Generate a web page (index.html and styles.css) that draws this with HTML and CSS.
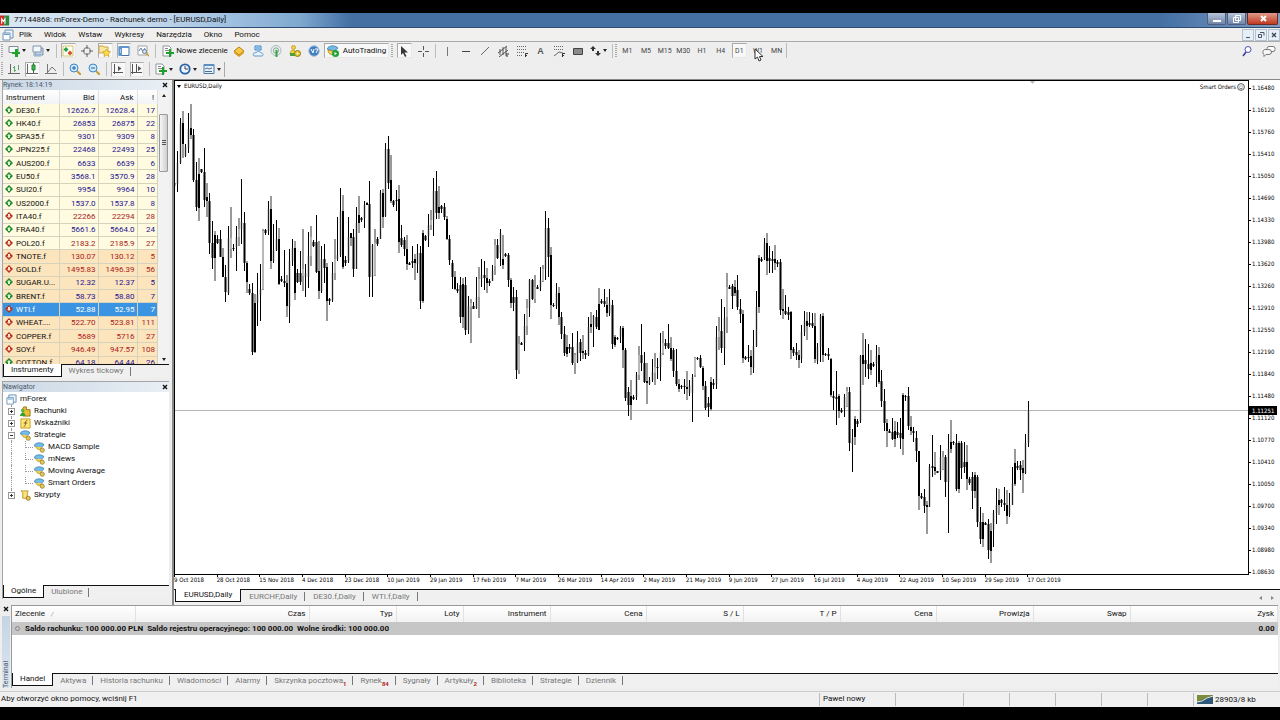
FILE: index.html
```html
<!DOCTYPE html>
<html lang="pl">
<head>
<meta charset="utf-8">
<title>77144868: mForex-Demo - Rachunek demo - [EURUSD,Daily]</title>
<link rel="stylesheet" href="styles.css">
</head>
<body>
<svg class="defs" aria-hidden="true">
  <defs>
    <symbol id="doc" viewBox="0 0 12 12"><path d="M3 1h8v8H3z" fill="#eaf3fb" stroke="#6f93b5"/><path d="M1 4h7v7H1z" fill="#fff" stroke="#6f93b5"/><path d="M2 5h5v1H2z" fill="#5e9bd0"/></symbol>
    <symbol id="newchart" viewBox="0 0 12 12"><path d="M1 1.500h9v6H1z" fill="#f5f8fb" stroke="#7d8b9a"/><path d="M7 4h3v3h2v2h-2v3H7V9H4V7h3z" fill="#20a32b"/></symbol>
    <symbol id="profiles" viewBox="0 0 12 12"><path d="M3 3h8v7H3z" fill="#b9d4ec" stroke="#8194a8"/><path d="M1 1h8v6H1z" fill="#f3f7fb" stroke="#8194a8"/><path d="M2 8v3h7" fill="none" stroke="#8aaccc"/></symbol>
    <symbol id="market" viewBox="0 0 12 12"><path d="M1 1h10v10H1z" fill="#fffdf2" stroke="#d9c76c"/><path d="M4 2l2.500 2.500L4 7 1.500 4.500z" fill="#26a040"/><path d="M8 5.500L10.500 8 8 10.500 5.500 8z" fill="#d0552f"/></symbol>
    <symbol id="target" viewBox="0 0 12 12"><circle cx="6" cy="6" r="3.500" fill="none" stroke="#777"/><path d="M6 0v4M6 8v4M0 6h4M8 6h4" stroke="#666"/></symbol>
    <symbol id="stars" viewBox="0 0 12 12"><path d="M0 1h4l1 1h4v6H0z" fill="#f7e9a4" stroke="#cfa634"/><path d="M7.500 4l1.300 2.300 2.700.5-2 1.900.4 2.800-2.400-1.200L5 11.500l.5-2.800-2-1.900 2.700-.5z" fill="#ffdc4b" stroke="#c99a1b" stroke-width=".7"/></symbol>
    <symbol id="terminal" viewBox="0 0 12 12"><path d="M1 1.500h10v9H1z" fill="#fff" stroke="#416fa3"/><path d="M1 1h10v2H1zM1 3h3v8H1z" fill="#5f96cf"/><path d="M2 5h1M2 7h1" stroke="#fff"/></symbol>
    <symbol id="tester" viewBox="0 0 12 12"><path d="M1 1h9v9H1z" fill="#fff" stroke="#a3a3a3"/><path d="M2 6l2-3 2 4 2-4" fill="none" stroke="#5784b0"/><circle cx="7.500" cy="6.500" r="2" fill="#d2e6f7" stroke="#66798c"/><path d="M9 8l3 3" stroke="#cd9b30" stroke-width="1.500"/></symbol>
    <symbol id="order" viewBox="0 0 12 12"><path d="M1 1h6l2 2v8H1z" fill="#fff" stroke="#8d96a0"/><path d="M3 3.500h3M3 5.500h4" stroke="#888"/><path d="M7 4h2v3h3v2H9v3H7V9H4V7h3z" fill="#1da12c"/></symbol>
    <symbol id="book" viewBox="0 0 12 12"><path d="M1 6l5-4 5 4-5 4z" fill="#f6c844" stroke="#b97d12"/><path d="M1 6v2l5 4 5-4V6l-5 4z" fill="#d79a23"/></symbol>
    <symbol id="sync" viewBox="0 0 12 12"><path d="M3 1h6v4H3z" fill="#d8edff" stroke="#2f84cb"/><path d="M4 3h4" stroke="#2f84cb"/><path d="M2 11c-2-2 0-4 2-3 1-2 4-2 5 0 2 0 3 2 1 3z" fill="#eaf5fd" stroke="#5d98ca"/></symbol>
    <symbol id="signal" viewBox="0 0 12 12"><circle cx="6" cy="5.500" r="5" fill="none" stroke="#a8b8c0"/><circle cx="6" cy="5.500" r="2.700" fill="#dceadd" stroke="#86a8a0"/><path d="M5.500 5h2v7h-2z" fill="#38a645"/></symbol>
    <symbol id="people" viewBox="0 0 12 12"><circle cx="4.500" cy="2.500" r="2" fill="#f6d33b" stroke="#b38c11" stroke-width=".7"/><path d="M1 9c0-5 6-5 6 0z" fill="#f6d33b" stroke="#b38c11" stroke-width=".7"/><circle cx="8.500" cy="8.500" r="3" fill="#e7c52d" stroke="#9b7a0d"/><path d="M1 8h5v3H1z" fill="#45a33e"/><circle cx="8.500" cy="8.500" r="1" fill="#fff"/></symbol>
    <symbol id="globe" viewBox="0 0 12 12"><circle cx="6" cy="6" r="5.200" fill="#3f7fc4" stroke="#9cb8d3"/><path d="M3 4l2 4 1-4M7 4h3l-2 4" fill="none" stroke="#fff"/></symbol>
    <symbol id="hat" viewBox="0 0 12 12"><path d="M0 4c2-4 8-4 11-1L7 7z" fill="#71bce8" stroke="#3a79a8" stroke-width=".8"/><path d="M2 5c1 4 5 4 7 1" fill="#f3d250" stroke="#a98622" stroke-width=".8"/><circle cx="9" cy="9" r="2.300" fill="#e8c451" stroke="#8b7b3d" stroke-width=".8"/></symbol>
    <symbol id="auto" viewBox="0 0 12 12"><path d="M0 4c2-4 8-4 11-1L7 6z" fill="#71bce8" stroke="#3a79a8" stroke-width=".8"/><path d="M1 5c0 6 7 6 9 1L6 6z" fill="#f3d250" stroke="#a98622" stroke-width=".8"/><circle cx="8.500" cy="8.500" r="3.500" fill="#20a437"/><path d="M7.500 7v3.200L10 8.600z" fill="#fff"/></symbol>
    <symbol id="cursor" viewBox="0 0 12 12"><path d="M3 1v9l2-2 2 4 1.500-1-2-3.500H10z" fill="#383838"/></symbol>
    <symbol id="cross" viewBox="0 0 12 12"><path d="M6.500 1v4M6.500 8v4M1 6.500h4M8 6.500h4" stroke="#555"/></symbol>
    <symbol id="vline" viewBox="0 0 12 12"><path d="M6.500 2v9" stroke="#777"/></symbol>
    <symbol id="hline" viewBox="0 0 12 12"><path d="M2 6.500h8" stroke="#444"/></symbol>
    <symbol id="diag" viewBox="0 0 12 12"><path d="M2 10l8-8" stroke="#666"/></symbol>
    <symbol id="channel" viewBox="0 0 12 12"><path d="M1 8l9-7M2 12l9-7M3 4v6M6 2v8M9 2v9" stroke="#555" fill="none"/><path d="M9 9h3M9 11h2" stroke="#333"/></symbol>
    <symbol id="fibo" viewBox="0 0 12 12"><path d="M1 1.500h10M1 4.500h10M1 7.500h8M1 10.500h6" stroke="#666" stroke-dasharray="1 1"/><path d="M9.500 12V8.500H12M9 10.500h2" stroke="#333" fill="none"/></symbol>
    <symbol id="fan" viewBox="0 0 12 12"><path d="M1 1.500h10M1 4.500h10" stroke="#666" stroke-dasharray="1 1"/><path d="M1 11l5-4 4 1" stroke="#666" fill="none"/><path d="M9.500 12V8.500H12M9 10.500h2" stroke="#333" fill="none"/></symbol>
    <symbol id="rect" viewBox="0 0 12 12"><path d="M1.500 3.500h9v6h-9z" fill="#8a8a8a" stroke="#444"/></symbol>
    <symbol id="arrows" viewBox="0 0 12 12"><path d="M4 1l3 3H5v2H3V4H1zM9 11L6 8h2V6h2v2h2z" fill="#333"/></symbol>
    <symbol id="bars" viewBox="0 0 12 12"><path d="M2.500 1v10M0 10.500h12" stroke="#666"/><path d="M6.500 3v6M5 4.500h1M7 7.500h1M10.500 2v5" stroke="#5aa866"/></symbol>
    <symbol id="candles" viewBox="0 0 12 12"><path d="M1.500 1v10M0 10.500h12" stroke="#666"/><path d="M7.500 0v10" stroke="#2b7a35"/><path d="M6 2h3v5H6z" fill="#38c04c" stroke="#2b7a35"/></symbol>
    <symbol id="line" viewBox="0 0 12 12"><path d="M2.500 1v10M0 10.500h12M3 9l4-5 4 4" stroke="#777" fill="none"/></symbol>
    <symbol id="zin" viewBox="0 0 12 12"><path d="M8 8l4 4" stroke="#c79b31" stroke-width="2"/><circle cx="5" cy="5" r="4" fill="#cfe7fb" stroke="#3d86c8"/><path d="M3 5h4M5 3v4" stroke="#2063a4"/></symbol>
    <symbol id="zout" viewBox="0 0 12 12"><path d="M8 8l4 4" stroke="#c79b31" stroke-width="2"/><circle cx="5" cy="5" r="4" fill="#cfe7fb" stroke="#3d86c8"/><path d="M3 5h4" stroke="#2063a4"/></symbol>
    <symbol id="scroll" viewBox="0 0 12 12"><path d="M2.500 1v10M1 9.500h10" stroke="#555"/><path d="M6 3l3.500 2.500L6 8z" fill="#555"/></symbol>
    <symbol id="shift" viewBox="0 0 12 12"><path d="M1.500 1v10M0 9.500h11M5.500 1v8" stroke="#555"/><path d="M7 3l3.500 2.500L7 8z" fill="#555"/></symbol>
    <symbol id="clock" viewBox="0 0 12 12"><circle cx="6" cy="6" r="4.700" fill="#eef5fd" stroke="#2862a8" stroke-width="1.800"/><path d="M6 3v3h3" fill="none" stroke="#444"/></symbol>
    <symbol id="template" viewBox="0 0 12 12"><path d="M1 1.500h10v9H1z" fill="#e8f1fa" stroke="#4e79a6"/><path d="M1 1h10v2H1z" fill="#5a8fc6"/><path d="M2 6l2-1 2 1 3-1M2 8.500h7" fill="none" stroke="#4a6f95"/></symbol>
    <symbol id="up" viewBox="0 0 8 8"><path d="M4 0l4 4-4 4-4-4z" fill="#1f8a2d"/><path d="M4 2l2 2H5v2H3V4H2z" fill="#dff5d8"/></symbol>
    <symbol id="down" viewBox="0 0 8 8"><path d="M4 0l4 4-4 4-4-4z" fill="#b5321f"/><path d="M4 6l2-2H5V2H3v2H2z" fill="#ffe2d3"/></symbol>
    <symbol id="accounts" viewBox="0 0 12 12"><path d="M4 1h3v3h4v7H3V3z" fill="#e9bf35" stroke="#98740e"/><circle cx="3" cy="5" r="2" fill="#53b544"/><path d="M0 11c0-5 6-5 6 0z" fill="#37a035"/></symbol>
    <symbol id="func" viewBox="0 0 12 12"><path d="M1 1h10v10H1z" fill="#ffe77a" stroke="#c49a21"/><path d="M8 3c-2-.5-2 1-2 3s-.5 3-2 3M4 5.500h4" fill="none" stroke="#6c5310"/></symbol>
    <symbol id="script" viewBox="0 0 12 12"><path d="M1 1h8l-1 2v6H3V3z" fill="#fbe27c" stroke="#b9962d"/><circle cx="9" cy="9" r="2.200" fill="#f2cc44" stroke="#92752a"/></symbol>
    <symbol id="close" viewBox="0 0 6 6"><path d="M1 1l4 4M5 1L1 5" stroke="#111" stroke-width="1.400"/></symbol>
  </defs>
</svg>

<header class="titlebar">
  <svg class="logo" viewBox="0 0 12 12"><path d="M0 0h5v12H0z" fill="#cf2b24"/><path d="M5 0h6v12H5z" fill="#2e8b3d"/><path d="M2 10V4l2 3 2-3v6" fill="none" stroke="#fff" stroke-width="1.300"/></svg>
  <h1>77144868: mForex-Demo - Rachunek demo - [EURUSD,Daily]</h1>
  <div class="winbtns">
    <button class="wb" aria-label="Minimalizuj"><svg viewBox="0 0 12 10"><path d="M2 6h8v2H2z" fill="#fff"/></svg></button>
    <button class="wb" aria-label="Przywróć"><svg viewBox="0 0 12 10"><path d="M4.500 1.500h5v5h-5zM2.500 3.500h5v5h-5z" fill="none" stroke="#fff"/></svg></button>
    <button class="wb wb-close" aria-label="Zamknij"><svg viewBox="0 0 12 10"><path d="M4 2l5 5M9 2L4 7" stroke="#fff" stroke-width="2"/></svg></button>
  </div>
</header>

<nav class="menubar">
  <svg class="ic"><use href="#doc"/></svg>
  <button>Plik</button><button>Widok</button><button>Wstaw</button><button>Wykresy</button><button>Narzędzia</button><button>Okno</button><button>Pomoc</button>
  <div class="mdi">
    <button aria-label="Minimalizuj okno"><svg viewBox="0 0 12 12"><path d="M4 8.500h4" stroke="#456"/></svg></button>
    <button aria-label="Przywróć okno"><svg viewBox="0 0 12 12"><path d="M5 3.500h4v3M3.500 5.500h3v3h-3z" fill="none" stroke="#456"/></svg></button>
    <button aria-label="Zamknij okno"><svg viewBox="0 0 12 12"><path d="M4 4l4 4M8 4L4 8" stroke="#345" stroke-width="1.300"/></svg></button>
  </div>
</nav>

<div class="toolbar tb1">
  <i class="grip"></i>
  <button class="drop" aria-label="Nowy wykres"><svg class="ic"><use href="#newchart"/></svg></button>
  <button class="drop" aria-label="Profile"><svg class="ic"><use href="#profiles"/></svg></button>
  <i class="sep"></i>
  <div class="group g5">
    <button class="on" aria-label="Rynek"><svg class="ic"><use href="#market"/></svg></button>
    <button aria-label="Okno danych"><svg class="ic"><use href="#target"/></svg></button>
    <button class="on" aria-label="Nawigator"><svg class="ic"><use href="#stars"/></svg></button>
    <button class="on" aria-label="Terminal"><svg class="ic"><use href="#terminal"/></svg></button>
    <button aria-label="Tester"><svg class="ic"><use href="#tester"/></svg></button>
  </div>
  <i class="sep"></i>
  <button class="wide order"><svg class="ic"><use href="#order"/></svg>Nowe zlecenie</button>
  <div class="group g5">
    <button aria-label="MetaEditor"><svg class="ic"><use href="#book"/></svg></button>
    <button aria-label="Hosting"><svg class="ic"><use href="#sync"/></svg></button>
    <button aria-label="Sygnały"><svg class="ic"><use href="#signal"/></svg></button>
    <button aria-label="Społeczność"><svg class="ic"><use href="#people"/></svg></button>
    <button aria-label="Market"><svg class="ic"><use href="#globe"/></svg></button>
  </div>
  <button class="wide auto on"><svg class="ic"><use href="#auto"/></svg>AutoTrading</button>
  <i class="grip"></i>
  <div class="group g2">
    <button class="on" aria-label="Kursor"><svg class="ic"><use href="#cursor"/></svg></button>
    <button aria-label="Celownik"><svg class="ic"><use href="#cross"/></svg></button>
  </div>
  <i class="sep"></i>
  <div class="group g8">
    <button aria-label="Linia pionowa"><svg class="ic"><use href="#vline"/></svg></button>
    <button aria-label="Linia pozioma"><svg class="ic"><use href="#hline"/></svg></button>
    <button aria-label="Linia trendu"><svg class="ic"><use href="#diag"/></svg></button>
    <button aria-label="Kanał"><svg class="ic"><use href="#channel"/></svg></button>
    <button aria-label="Fibonacci"><svg class="ic"><use href="#fibo"/></svg></button>
    <button class="letter">A</button>
    <button aria-label="Wachlarz"><svg class="ic"><use href="#fan"/></svg></button>
    <button aria-label="Prostokąt"><svg class="ic"><use href="#rect"/></svg></button>
  </div>
  <button class="drop slim" aria-label="Strzałki"><svg class="ic"><use href="#arrows"/></svg></button>
  <i class="sep"></i><i class="grip"></i>
  <div class="group g9">
    <button>M1</button><button>M5</button><button>M15</button><button>M30</button><button>H1</button><button>H4</button><button class="on">D1</button><button class="hover">W1<svg class="pointer" viewBox="0 0 10 14"><path d="M1 1v10l2.500-2 1.500 4 2-1-1.500-3.500H9z" fill="#fff" stroke="#333"/></svg></button><button>MN</button>
  </div>
  <div class="tools-end">
    <button aria-label="Szukaj"><svg class="ic" viewBox="0 0 12 12"><circle cx="7" cy="4.500" r="3" fill="#fff" stroke="#4a4fb0"/><path d="M5 7l-3 4" stroke="#3a3f9c" stroke-width="1.600"/></svg></button>
    <button aria-label="Czat"><svg class="chat" viewBox="0 0 14 12"><rect x="5" y="1.500" width="8" height="5" rx="2" fill="#fff" stroke="#777"/><path d="M3 4.500h4a2 2 0 0 1 0 5H4l-2 2v-2c-2-1-1-5 1-5z" fill="#f5f5f5" stroke="#777"/></svg></button>
  </div>
</div>

<div class="toolbar tb2">
  <i class="grip"></i>
  <div class="group g3">
    <button aria-label="Słupki"><svg class="ic"><use href="#bars"/></svg></button>
    <button class="on" aria-label="Świece"><svg class="ic"><use href="#candles"/></svg></button>
    <button aria-label="Linia"><svg class="ic"><use href="#line"/></svg></button>
  </div>
  <i class="sep"></i>
  <div class="group g2">
    <button aria-label="Powiększ"><svg class="ic"><use href="#zin"/></svg></button>
    <button aria-label="Pomniejsz"><svg class="ic"><use href="#zout"/></svg></button>
  </div>
  <i class="sep"></i>
  <div class="group g2">
    <button class="on" aria-label="Autoprzewijanie"><svg class="ic"><use href="#scroll"/></svg></button>
    <button class="on" aria-label="Przesunięcie"><svg class="ic"><use href="#shift"/></svg></button>
  </div>
  <i class="sep"></i>
  <button class="drop" aria-label="Wskaźniki"><svg class="ic"><use href="#order"/></svg></button>
  <button class="drop" aria-label="Interwały"><svg class="ic"><use href="#clock"/></svg></button>
  <button class="drop" aria-label="Szablony"><svg class="ic"><use href="#template"/></svg></button>
  <i class="edge"></i>
</div>

<main class="main">
  <aside class="side">
    <section class="panel market">
      <div class="caption"><h2>Rynek: 18:14:19</h2><button aria-label="Zamknij"><svg><use href="#close"/></svg></button></div>
      <div class="market-body">
        <table class="quotes">
          <colgroup><col class="c-name"><col class="c-bid"><col class="c-ask"><col></colgroup>
          <thead><tr><th>Instrument</th><th>Bid</th><th>Ask</th><th>!</th></tr></thead>
          <tbody id="quotes"></tbody>
        </table>
        <div class="scrollbar"><i class="tri-up"></i><i class="thumb"></i><i class="tri-down"></i></div>
      </div>
      <div class="tabs"><button class="active">Instrumenty</button><button>Wykres tickowy</button></div>
    </section>
    <section class="panel navigator">
      <div class="caption"><h2>Nawigator</h2><button aria-label="Zamknij"><svg><use href="#close"/></svg></button></div>
      <ul class="tree">
        <li><svg class="ic"><use href="#doc"/></svg>mForex</li>
        <li class="l1"><i class="box plus"></i><svg class="ic"><use href="#accounts"/></svg>Rachunki</li>
        <li class="l1"><i class="box plus"></i><svg class="ic"><use href="#func"/></svg>Wskaźniki</li>
        <li class="l1"><i class="box"></i><svg class="ic"><use href="#hat"/></svg>Strategie</li>
        <li class="l2"><svg class="ic"><use href="#hat"/></svg>MACD Sample</li>
        <li class="l2"><svg class="ic"><use href="#hat"/></svg>mNews</li>
        <li class="l2"><svg class="ic"><use href="#hat"/></svg>Moving Average</li>
        <li class="l2"><svg class="ic"><use href="#hat"/></svg>Smart Orders</li>
        <li class="l1 end"><i class="box plus"></i><svg class="ic"><use href="#script"/></svg>Skrypty</li>
      </ul>
      <div class="tabs"><button class="active">Ogólne</button><button>Ulubione</button></div>
    </section>
  </aside>

  <section class="chart">
    <div class="chart-grid">
      <div class="plot">
        <svg id="candles-plot" viewBox="175 81 1073 493" preserveAspectRatio="none" role="img" aria-label="EURUSD, Daily">
          <path d="M175 410.500H1248" stroke="#b4b4b4"/>
          <path d="M1030 81h5l-2.500 3z" fill="#bbb"/>
        </svg>
        <span class="symbol">EURUSD,Daily</span>
        <span class="expert">Smart Orders<svg viewBox="0 0 8 8"><circle cx="4" cy="4" r="3.400" fill="#fff" stroke="#333" stroke-width=".8"/><path d="M2.500 3h1M4.500 3h1M2.300 4.800c1 1.300 2.400 1.300 3.400 0" stroke="#333" stroke-width=".8" fill="none"/></svg></span>
      </div>
      <div class="prices" id="prices"></div>
      <div class="times" id="times"></div>
      <output class="quote-now">1.11251</output>
    </div>
    <div class="tabs chart-tabs"><button class="active">EURUSD,Daily</button><button>EURCHF,Daily</button><button>DE30.f,Daily</button><button>WTI.f,Daily</button><span class="tab-arrows"><i></i><i></i></span></div>
  </section>
</main>

<section class="terminal">
  <div class="strip"><button aria-label="Zamknij"><svg><use href="#close"/></svg></button><h2>Terminal</h2></div>
  <div class="term-body">
    <table class="orders">
      <colgroup><col class="w123"><col class="w174"><col class="w87"><col class="w67"><col class="w87"><col class="w96"><col class="w97"><col class="w97"><col class="w96"><col class="w97"><col class="w97"><col></colgroup>
      <thead><tr><th>Zlecenie <i>/</i></th><th>Czas</th><th>Typ</th><th>Loty</th><th>Instrument</th><th>Cena</th><th>S / L</th><th>T / P</th><th>Cena</th><th>Prowizja</th><th>Swap</th><th>Zysk</th></tr></thead>
      <tbody><tr><td colspan="11"><span class="dot"></span>Saldo rachunku: 100 000.00 PLN&nbsp; Saldo rejestru operacyjnego: 100 000.00&nbsp; Wolne środki: 100 000.00</td><td>0.00</td></tr></tbody>
    </table>
    <div class="tabs term-tabs"><button class="active">Handel</button><button>Aktywa</button><button>Historia rachunku</button><button>Wiadomości</button><button>Alarmy</button><button>Skrzynka pocztowa<sub>1</sub></button><button>Rynek<sub>84</sub></button><button>Sygnały</button><button>Artykuły<sub>2</sub></button><button>Biblioteka</button><button>Strategie</button><button>Dziennik</button></div>
  </div>
</section>

<footer class="status">
  <span class="hint">Aby otworzyć okno pomocy, wciśnij F1</span>
  <span class="s76">Pawel nowy</span><span class="s68"></span><span class="s47"></span><span class="s47"></span><span class="s47"></span><span class="s47"></span><span class="s47"></span>
  <span class="traffic"><svg viewBox="0 0 16 9"><path d="M0 0h16v9H0z" fill="#2d5878"/><path d="M0 0h16L0 7z" fill="#7d8b3c"/><path d="M0 7l5-1 5-3 6-2" fill="none" stroke="#e8edd8"/></svg>28903/8 kb</span>
</footer>
<script src="chart.js"></script>
</body>
</html>
```
FILE: styles.css
```css
* { box-sizing: border-box; }
body { margin: 0; padding: 13px 0; height: 100vh; display: flex; flex-direction: column; background: #000; color: #111; font: 8px/12px Roboto, "Open Sans", sans-serif; overflow: hidden; }
button { font: inherit; color: inherit; background: none; border: 0; padding: 0; margin: 0; display: flex; align-items: center; justify-content: center; white-space: nowrap; }
h1, h2 { margin: 0; font: inherit; white-space: nowrap; }
.defs { position: absolute; top: 0; width: 0; height: 0; }
.ic { width: 12px; height: 12px; flex: none; }

.titlebar { height: 15px; flex: none; display: flex; align-items: center; background: linear-gradient(90deg, #dbe7f3 0, #c3d7ea 150px, #9fc0e0 230px, #7fa8d0 300px, #4470a4 350px, #4470a4 1160px, #7f9cc0 100%); border-bottom: 1px solid #2c4c74; }
.titlebar h1 { flex: 1; padding-left: 4px; }
.logo { width: 10px; height: 11px; }
.winbtns { display: flex; align-self: flex-start; gap: 1px; padding-right: 2px; }
.wb { width: 19px; height: 12px; background: linear-gradient(#b6c4d8, #7186a8); border: 1px solid #4d6082; border-top: 0; border-radius: 0 0 2px 2px; }
.wb svg { width: 12px; height: 10px; }
.wb-close { width: 31px; background: linear-gradient(#e09a8c, #c03a20); border-color: #6e2a22; }

.menubar { height: 14px; flex: none; display: flex; align-items: center; background: #f1f0ee; border-bottom: 1px solid #aaa; padding-left: 2px; }
.menubar > button { margin-left: 12px; }
.menubar > .ic + button { margin-left: 5px; }
.mdi { margin-left: auto; display: flex; gap: 1px; }
.mdi button { width: 12px; height: 12px; background: #e6eff8; border: 1px solid #b5c3d0; }
.mdi svg { width: 12px; height: 12px; flex: none; }

.toolbar { flex: none; display: flex; align-items: center; background: #eee; padding: 0 0 2px 1px; }
.tb1 { height: 19px; }
.tb2 { height: 18px; }
.grip { width: 2px; height: 14px; margin-right: 2px; background: repeating-linear-gradient(#aaa 0 1px, #eee 1px 2px); }
.sep { width: 1px; height: 14px; background: #bdbdbd; margin: 0 2px 0 3px; }
.sep + .grip { margin-right: 1px; }
.edge { width: 1px; height: 15px; background: #aaa; }
.toolbar button { height: 15px; border: 1px solid transparent; }
.toolbar button.on { background: #f8f8f8; border-color: #aaa #e8e8e8 #e8e8e8 #aaa; }
.toolbar .group .on { margin: 0 2px; }
.drop { width: 24px; gap: 2px; }
.slim { width: 22px; }
.drop::after { content: ""; border: 2px solid transparent; border-top: 3px solid #222; border-bottom: 0; }
.group { display: grid; grid-auto-flow: column; grid-auto-columns: minmax(0, 1fr); flex: none; }
.g2 { width: 37px; }
.g3 { width: 55px; }
.g5 { width: 93px; }
.g8 { width: 149px; }
.g9 { width: 169px; font-size: 7px; color: #444; border: 1px solid #bbb; border-width: 0 1px 0 0; }
.letter { font: bold 9px/12px "Liberation Sans", sans-serif; color: #555; }
.order { width: 70px; gap: 2px; margin-left: 2px; }
.auto { width: 65px; gap: 4px; margin: 0 2px 0 1px; }
.hover { position: relative; }
.pointer { position: absolute; left: 4px; top: 4px; width: 10px; height: 14px; z-index: 2; }
.tools-end { margin-left: auto; display: flex; gap: 7px; padding-right: 3px; }
.chat { width: 14px; height: 12px; }

.main { flex: 1; min-height: 0; display: flex; background: #eee; border-top: 1px solid #8a8a8a; }
.side { width: 172px; flex: none; display: flex; flex-direction: column; gap: 3px; padding: 0 3px 6px 2px; }
.panel { background: #fff; border: 1px solid #a5a5a5; border-width: 0 0 0 1px; display: flex; flex-direction: column; }
.navigator { flex: 1; min-height: 0; border-width: 1px 0 0 1px; }
.caption { height: 10px; flex: none; display: flex; align-items: center; justify-content: space-between; background: linear-gradient(90deg, #cbd8e6, #e9eff5); color: #4a5a6c; font-size: 7px; line-height: 10px; padding-right: 1px; }
.caption svg, .strip svg { width: 6px; height: 6px; }
.market-body { display: flex; height: 274px; overflow: hidden; }
.quotes { width: 155px; height: 280px; table-layout: fixed; border-collapse: collapse; line-height: 11px; }
.c-name { width: 56px; }
.c-bid { width: 39px; }
.c-ask { width: 39px; }
.quotes th { height: 14px; padding: 0 3px; font-weight: 400; text-align: right; background: linear-gradient(#fff, #f2f3f5); border-right: 1px solid #e0e0e0; }
.quotes th:first-child { text-align: left; }
.quotes td { padding: 0 2px; text-align: right; background: #fffbe0; border: 1px solid #d5d2be; border-width: 0 1px 1px 0; color: #1e1290; white-space: nowrap; }
.quotes td:first-child { text-align: left; color: #111; }
.quotes svg { width: 8px; height: 8px; margin-right: 3px; vertical-align: -1px; }
.quotes .fall td { color: #a8201a; }
.quotes .warm td { background: #fce4bd; }
.quotes .fall td:first-child { color: #111; }
.quotes .pick td, .quotes .pick td:first-child { background: #3a94e2; color: #fff; }
.scrollbar { flex: 1; background: #f2f2f2; display: flex; flex-direction: column; align-items: center; padding: 4px 0 3px; }
.tri-up { border: 2px solid transparent; border-bottom: 3px solid #222; border-top: 0; }
.tri-down { border: 2px solid transparent; border-top: 3px solid #222; border-bottom: 0; margin-top: auto; }
.thumb { margin-top: 17px; width: 9px; height: 58px; border: 1px solid #999; border-radius: 1px; background: linear-gradient(#555, #555) 2px 25px / 4px 1px no-repeat, linear-gradient(#555, #555) 2px 27px / 4px 1px no-repeat, linear-gradient(#555, #555) 2px 29px / 4px 1px no-repeat, linear-gradient(90deg, #f6f6f6, #cfcfcf); }

.tabs { height: 14px; flex: none; display: flex; background: #f0f0f0; border-top: 1px solid #111; color: #777; }
.tabs button { padding: 0 7px; height: 12px; position: relative; }
.tabs button:not(.active)::after { content: ""; position: absolute; right: 0; top: 2px; height: 9px; border-right: 1px solid #777; }
.tabs .active { background: #fff; color: #111; border: 1px solid #111; border-top: 0; height: 13px; margin-top: -1px; }

.tree { list-style: none; margin: 0; padding: 1px 0 0 3px; flex: 1; }
.tree li { height: 12px; display: flex; align-items: center; gap: 3px; position: relative; }
.tree .ic { width: 11px; height: 11px; }
.tree .l1 { padding-left: 2px; }
.tree .l2 { padding-left: 28px; }
.box { width: 7px; height: 7px; margin-right: 2px; border: 1px solid #999; background: linear-gradient(#333, #333) center / 3px 1px no-repeat #fff; position: relative; z-index: 1; }
.box.plus { background: linear-gradient(#333, #333) center / 3px 1px no-repeat, linear-gradient(#333, #333) center / 1px 3px no-repeat #fff; }
.l1::before, .l2::before { content: ""; position: absolute; left: 5px; top: 0; bottom: 0; border-left: 1px dotted #999; }
.end::before { bottom: 6px; }
.l2::after { content: ""; position: absolute; left: 19px; top: 0; width: 7px; height: 6px; border: 1px dotted #999; border-width: 0 0 1px 1px; }

.chart { flex: 1; min-width: 0; display: flex; flex-direction: column; border-left: 2px solid #8a8a8a; }
.chart-grid { flex: 1; min-height: 0; display: grid; grid-template: minmax(0, 1fr) 14px / minmax(0, 1fr) 31px; background: #fff; position: relative; font: 6px/10px "DejaVu Sans Condensed", "DejaVu Sans", sans-serif; color: #000; }
.plot { border: 1px solid #000; position: relative; min-height: 0; }
.plot > svg { display: block; width: 100%; height: 100%; }
.symbol { position: absolute; left: 2px; top: 0; display: flex; align-items: center; gap: 3px; }
.symbol::before { content: ""; border: 2px solid transparent; border-top: 3px solid #000; border-bottom: 0; }
.expert { position: absolute; right: 3px; top: 1px; display: flex; align-items: center; gap: 1px; }
.expert svg { width: 8px; height: 8px; }
.prices { grid-column: 2; grid-row: 1 / 3; display: flex; flex-direction: column; justify-content: space-between; padding: 3px 0 12px; }
.prices span { display: flex; align-items: center; gap: 1px; }
.prices span::before { content: ""; width: 2px; border-top: 1px solid #000; }
.times { grid-column: 1; grid-row: 2; display: flex; width: 896px; white-space: nowrap; }
.times span { flex: 1 1 0; width: 0; position: relative; }
.times span::before { content: ""; position: absolute; left: 0; top: 0; height: 2px; border-left: 1px solid #000; }
.quote-now { position: absolute; right: 3px; top: 326px; width: 28px; height: 9px; line-height: 9px; padding-left: 3px; background: #000; color: #fff; }
.chart-tabs { height: 16px; padding-left: 1px; }
.chart-tabs button { height: 13px; padding: 0 8px; }
.tab-arrows { margin-left: auto; display: flex; align-items: center; gap: 9px; padding-right: 6px; }
.tab-arrows i { border: 2px solid transparent; border-right: 3px solid #888; border-left: 0; }
.tab-arrows i + i { border-left: 3px solid #888; border-right: 0; }

.terminal { height: 86px; flex: none; display: flex; background: #eee; padding-bottom: 3px; }
.strip { width: 11px; display: flex; flex-direction: column; align-items: center; padding-top: 1px; gap: 4px; }
.strip h2 { flex: 1; width: 8px; line-height: 8px; font-size: 7px; writing-mode: vertical-rl; transform: rotate(180deg); background: linear-gradient(#dde7f1, #c5d3e3); color: #4a5a6c; }
.term-body { flex: 1; min-width: 0; display: flex; flex-direction: column; background: #fff; border: 1px solid #999; border-width: 1px 0 0 1px; margin-right: 2px; }
.orders { width: 100%; table-layout: fixed; border-collapse: collapse; }
.w123 { width: 123px; }
.w174 { width: 174px; }
.w87 { width: 87px; }
.w67 { width: 67px; }
.w96 { width: 96px; }
.w97 { width: 97px; }
.orders th { height: 16px; padding: 0 3px; font-weight: 400; text-align: right; background: linear-gradient(#fff, #f2f2f2); border-right: 1px solid #e2e2e2; white-space: nowrap; }
.orders th:first-child { text-align: left; }
.orders th i { color: #888; margin-left: 4px; font-size: 6px; }
.orders td { height: 13px; padding: 0 3px; background: #c6c6c6; font-weight: 700; white-space: nowrap; }
.orders td:last-child { text-align: right; }
.dot { display: inline-block; width: 5px; height: 5px; border: 1px solid #888; border-radius: 50%; margin-right: 5px; }
.term-tabs { margin-top: auto; height: 15px; }
.term-tabs button { padding: 0 7px; height: 13px; }
.term-tabs sub { font-size: 6px; line-height: 6px; color: #b0201c; align-self: flex-end; font-weight: 700; }

.status { height: 16px; flex: none; display: flex; align-items: center; background: #f0f0f0; border-top: 1px solid #ccc; white-space: nowrap; }
.status span { height: 13px; border-left: 1px solid #bbb; padding-left: 3px; }
.status .hint { flex: 1; border: 0; padding-left: 1px; }
.s76 { width: 76px; }
.s68 { width: 68px; }
.s47 { width: 46px; }
.status .traffic { width: 87px; display: flex; align-items: center; gap: 2px; }
.traffic svg { width: 16px; height: 9px; }
```
FILE: chart.js
```js
// Quotes: name, bid, ask, spread, flags (d = falling, w = warm row, s = selected)
const quotes = [
  ["DE30.f", "12626.7", "12628.4", 17, ""], ["HK40.f", "26853", "26875", 22, ""],
  ["SPA35.f", "9301", "9309", 8, ""], ["JPN225.f", "22468", "22493", 25, ""],
  ["AUS200.f", "6633", "6639", 6, ""], ["EU50.f", "3568.1", "3570.9", 28, ""],
  ["SUI20.f", "9954", "9964", 10, ""], ["US2000.f", "1537.0", "1537.8", 8, ""],
  ["ITA40.f", "22266", "22294", 28, "d"], ["FRA40.f", "5661.6", "5664.0", 24, ""],
  ["POL20.f", "2183.2", "2185.9", 27, "d"], ["TNOTE.f", "130.07", "130.12", 5, "dw"],
  ["GOLD.f", "1495.83", "1496.39", 56, "dw"], ["SUGAR.U...", "12.32", "12.37", 5, "w"],
  ["BRENT.f", "58.73", "58.80", 7, "w"], ["WTI.f", "52.88", "52.95", 7, "dws"],
  ["WHEAT....", "522.70", "523.81", 111, "dw"], ["COPPER.f", "5689", "5716", 27, "dw"],
  ["SOY.f", "946.49", "947.57", 108, "dw"], ["COTTON.f", "64.18", "64.44", 26, "w"]
];
document.getElementById("quotes").innerHTML = quotes.map(([n, b, a, s, f]) => {
  const cls = (f.includes("d") ? "fall " : "") + (f.includes("w") ? "warm " : "") + (f.includes("s") ? "pick" : "");
  const icon = f.includes("d") ? "down" : "up";
  return `<tr class="${cls}"><td><svg><use href="#${icon}"/></svg>${n}</td><td>${b}</td><td>${a}</td><td>${s}</td></tr>`;
}).join("");

const prices = "1.16480 1.16120 1.15760 1.15410 1.15050 1.14690 1.14330 1.13980 1.13620 1.13260 1.12910 1.12550 1.12190 1.11840 1.11480 1.11120 1.10770 1.10410 1.10050 1.09700 1.09340 1.08980 1.08630";
document.getElementById("prices").innerHTML = prices.split(" ").map(p => `<span>${p}</span>`).join("");

const times = ["9 Oct 2018", "28 Oct 2018", "15 Nov 2018", "4 Dec 2018", "23 Dec 2018", "10 Jan 2019", "29 Jan 2019", "17 Feb 2019", "7 Mar 2019", "26 Mar 2019", "14 Apr 2019", "2 May 2019", "21 May 2019", "9 Jun 2019", "27 Jun 2019", "16 Jul 2019", "4 Aug 2019", "22 Aug 2019", "10 Sep 2019", "29 Sep 2019", "17 Oct 2019"];
document.getElementById("times").innerHTML = times.map(t => `<span>${t}</span>`).join("");

// Candles: high, body top, body bottom, low in thirds of a pixel below each run's origin; + marks a rising day.
const runs = [
  [76, "320 325 329 331+,225 262 325 348+,125 140 262 264+,105 140 205 245,205 212 240 242+,110 160 215 230+,84 157 178 188,160 178 313 318,258 313 392 405,245 295 395 435,278 280 288 292,215 288 372 392,320 362 376 422,350 376 500 534,435 500 545 578,465 476 545 615,476 490 502 504,462 490 542 544,515 542 602 604,568 602 648 678,450 487 650 656+,392 487 520 546+,505 515 520 526,450 482 512 585+,425 458 482 510+,308 438 460 505+,408 440 560 585,555 560 618 650,625 640 652 656,620 652 828 838,655 682 828 830,590 656 682 750+,565 638 656 735+,458 466 640 642+,458 463 472 476,376 398 465 478+,360 398 555 578,445 522 555 560+,432 488 522 526+,456 488 625 628,600 608 616 618,522 614 622 634,598 622 690 722,518 555 692 742+,490 516 555 570+,495 516 650 672,580 590 618 622,525 590 618 628,460 578 600 646+,565 590 604 662+,468 540 604 636+,450 482 540 570+,492 497 510 512,416 497 588 590,494 585 645 668,510 550 645 650+,505 550 575 622,562 572 676 735,665 670 676 688,558 592 672 678+,490 550 592 612+,422 538 550 554+,336 405 538 542+,358 405 572 578,540 553 560 570,424 482 556 560+,470 472 485 510,460 482 578 602,392 440 578 580+,360 418 440 470,422 426 432 438,374 386 425 456+,378 382 386 388,316 385 602 664,505 508 602 664+,460 500 598 600+,482 488 504 510,342 352 488 490+,340 352 424 455,202 220 420 422+,180 220 320 340,238 313 375 380,372 376 388 392,342 372 376 405,328 370 498 530,446 486 508 512,484 492 520 540,478 520 565 582,558 560 566 568,510 555 560 576,535 550 562 612,505 532 565 590+,510 530 676 698,462 470 676 680,476 480 492 496,415 446 480 512+,402 432 446 462+,306 345 432 480+,284 345 410 430,330 392 412 430,386 390 400 410,382 394 422 432,420 428 488 492,476 488 552 568,552 560 602 638,585 602 640 642,622 640 646 652,604 628 722 742,606 624 724 756,602 628 762 776,660 690 762 774+,668 680 692 802+,678 690 698 700,604 662 695 700+,574 608 664 725+,548 596 608 632+,555 598 606 642,576 606 622 650,608 615 622 630,568 586 614 616+,490 508 570 598+,488 508 545 548,458 470 530 570+"],
  [190, "135 206 226 238,190 193 198 202,190 196 270 290,265 270 340 355,292 322 340 362,300 322 540 568,438 462 540 552+,456 458 464 466,372 408 458 484+,328 355 408 434+,268 270 355 380+,266 270 328 330,256 290 326 340+,286 290 296 298,230 270 292 304+,225 236 274 276+,62 115 238 270+,85 115 200 260,170 195 345 388,338 344 348 350,278 310 348 356+,290 310 382 406,366 382 432 446,408 432 490 498,435 470 492 502,462 472 478 490,428 472 520 524,490 495 518 552+,424 458 515 520+,448 455 490 512,436 484 490 508,480 490 496 506,382 410 495 498+,366 402 412 430,374 378 405 470+,360 380 412 418,294 342 420 420,328 332 338 342,298 334 342 350,320 344 370 380,296 340 370 378+,330 345 462 476,436 440 464 470,440 444 448 450,408 414 442 458+,408 414 480 535,475 480 625 634,590 606 644 678,570 618 645 690,614 620 626 630,545 555 622 630+,468 495 555 570+,402 495 518 544,486 518 575 580,520 572 578 642,560 570 582 586+,506 545 570 576+,488 532 548 584+,505 532 535 566,430 490 532 572+,424 458 490 495+,446 458 468 478,402 458 475 478,440 474 508 512,474 480 544 560,478 544 582 588,566 582 598 606,584 588 592 596,568 588 592 612,544 590 598 630,570 584 608 618+,552 560 610 696+,500 504 556 560+,500 503 508 510,495 505 532 535,528 534 588 600,572 588 655 660,620 640 650 680,560 575 658 662,568 578 586 598,408 440 582 598+,380 424 442 480+,326 424 474 488,352 384 475 524+,248 290 382 430+,285 290 296 298,282 288 318 356,270 290 310 318,256 300 350 360,328 358 372 400,360 372 505 520,498 502 508 510,464 500 504 515,480 498 532 556,420 468 534 548+,304 352 468 470+,195 205 352 368,202 206 212 216,144 158 206 210+,130 158 212 256,168 205 212 250,182 206 212 248,165 208 218 240,210 215 222 232,206 215 360 374,296 358 364 386,314 362 372 374,350 366 374 390,362 366 480 508,472 478 490 498,458 485 495 510,480 495 510 535,404 425 508 518+,362 394 426 438+,366 394 408 450,366 400 404 410,368 400 408 414,370 408 508 518"],
  [280, "190 202 242 252+,102 108 202 245+,100 108 225 246,218 222 226 228,205 222 228 240,235 238 345 352,334 348 354 390,272 350 358 434,342 348 392 415,385 390 396 400,342 352 388 412+,322 333 378 380+,322 335 490 512,446 475 492 575+,408 418 472 494,416 424 432 442,226 228 424 428+,160 226 252 315,176 240 252 290,192 252 268 298,210 248 270 285,246 252 258 262,194 228 252 322+,200 224 306 312,270 304 362 380,328 362 430 454,416 430 454 500,448 452 458 460,414 455 478 480,424 452 478 500,425 455 465 475,415 460 475 508,340 345 476 525,344 347 352 364,320 348 438 450,408 440 452 466,440 452 458 486,452 475 514 545,512 514 648 690,640 648 654 658,628 652 678 700,662 676 682 762,552 562 680 682+,466 558 564 592,516 560 574 584,572 574 578 580,496 530 575 600+,514 530 568 570+,524 530 606 650,462 508 606 760+,420 487 508 520,482 486 490 494,462 490 626 634,482 490 626 640,482 488 565 598,486 545 560 580,496 545 598 630,590 598 610 614,575 590 632 686,576 584 634 654,584 590 726 740,680 726 778 792,698 726 778 800,726 730 734 736,718 732 810 838,728 752 812 848,690 698 750 802+,624 676 698 732+,628 660 676 704,656 660 668 680,622 668 676 692,630 675 708 732,640 675 706 710+,560 610 676 676+,506 548 612 618,544 558 564 570,542 555 570 600,540 565 580 638,462 490 578 582+,363 390 488 502+"]
];
const step = [0, 2.5, 5.5];
let i = 0, wicks = "", soft = "", edges = "", full = "", hollow = "";
for (const [top, data] of runs) {
  for (const bar of data.split(",")) {
    const rising = bar.endsWith("+");
    const [h, t, b, l] = bar.replace("+", "").split(" ").map(v => Math.round(top + v / 3));
    const slot = i % 3;
    const x = 175 + 8 * Math.floor(i / 3) + step[slot];
    const y2 = Math.max(b, t + 1);
    const wick = `M${x} ${h}V${t}M${x} ${y2}V${l}`;
    if (slot) wicks += wick; else soft += wick;
    if (rising) {
      hollow += `M${x - 1} ${t}h2V${y2}h-2z`;
      if (slot) edges += `M${x} ${t}V${y2}`;
    } else {
      full += `M${x - 1} ${t}h2V${y2}h-2z`;
    }
    i++;
  }
}
document.getElementById("candles-plot").insertAdjacentHTML("beforeend",
  `<path d="${hollow}" fill="#b8b8b8"/><path d="${edges}" stroke="#222"/><path d="${soft}" stroke="#999" stroke-width="2"/><path d="${wicks}" stroke="#000"/><path d="${full}" fill="#000"/>`);
```
